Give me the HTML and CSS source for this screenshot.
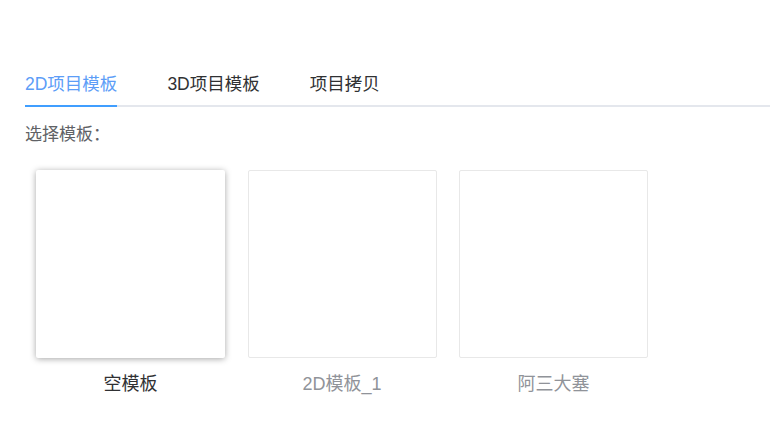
FILE: index.html
```html
<!DOCTYPE html>
<html lang="zh-CN">
<head>
<meta charset="utf-8">
<title>选择模板</title>
<link rel="stylesheet" href="styles.css">
</head>
<body>
<div class="page">
  <div class="tabs">
    <div class="tab active">2D项目模板</div>
    <div class="tab">3D项目模板</div>
    <div class="tab">项目拷贝</div>
  </div>
  <div class="section-label">选择模板：</div>
  <div class="templates">
    <div class="template selected">
      <div class="thumb"></div>
      <div class="name">空模板</div>
    </div>
    <div class="template">
      <div class="thumb"></div>
      <div class="name">2D模板_1</div>
    </div>
    <div class="template">
      <div class="thumb"></div>
      <div class="name">阿三大塞</div>
    </div>
  </div>
</div>
</body>
</html>
```
FILE: styles.css
```css
html, body {
  margin: 0;
  padding: 0;
  background: #ffffff;
}
body {
  font-family: "Liberation Sans", "Noto Sans CJK SC", sans-serif;
  color: #303133;
  overflow: hidden;
}
.page {
  padding: 65px 0 0 25px;
}
.tabs {
  display: flex;
  gap: 50px;
  border-bottom: 2px solid #e4e7ed;
  width: 760px;
}
.tab {
  position: relative;
  height: 40px;
  line-height: 38px;
  font-size: 17.5px;
  color: #303133;
}
.tab.active {
  color: #5c9df7;
}
.tab.active::after {
  content: "";
  position: absolute;
  left: 0;
  right: 0;
  bottom: -2px;
  height: 2px;
  background: #409eff;
}
.section-label {
  margin-top: 17px;
  font-size: 17px;
  line-height: 22px;
  color: #606266;
}
.templates {
  display: flex;
  gap: 22.5px;
  margin-top: 24px;
  padding-left: 11px;
}
.template {
  width: 189px;
  display: flex;
  flex-direction: column;
  align-items: center;
}
.thumb {
  width: 187px;
  height: 186px;
  border: 1px solid #e8e8e8;
  border-radius: 2px;
  background: #fff;
}
.template.selected .thumb {
  border-color: transparent;
  box-shadow: 0 1px 6px rgba(0, 0, 0, 0.35);
}
.name {
  margin-top: 14px;
  font-size: 18px;
  line-height: 24px;
  color: #909399;
}
.template.selected .name {
  color: #303133;
}
```
